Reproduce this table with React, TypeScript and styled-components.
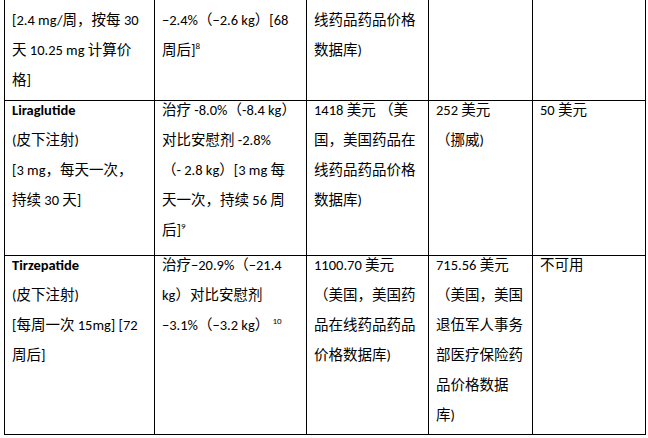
import styled, { createGlobalStyle } from "styled-components";
import { ReactNode } from "react";

const GlobalStyle = createGlobalStyle`
  html, body {
    margin: 0;
    padding: 0;
    background: #ffffff;
  }
  body {
    font-family: "Carlito", "Lato", "Noto Sans CJK SC", sans-serif;
    color: #000000;
  }
`;

const Table = styled.div`
  display: flex;
  flex-direction: column;
  width: 642px;
  margin-left: 4px;
`;

const Row = styled.div<{ $height: number }>`
  display: grid;
  grid-template-columns: 150px 152px 122px 104px 114px;
  height: ${({ $height }) => $height}px;
`;

const Cell = styled.div<{ $padTop: number; $last: boolean }>`
  box-sizing: border-box;
  border-left: 1px solid #000;
  border-right: ${({ $last }) => ($last ? "1px solid #000" : "none")};
  border-bottom: 1px solid #000;
  padding: ${({ $padTop }) => $padTop}px 4px 0 7px;
  font-size: 14.5px;
  overflow: hidden;
`;

const Line = styled.div`
  line-height: 18px;
  margin-bottom: 12px;
  white-space: nowrap;
`;

const Name = styled.span`
  font-weight: 700;
`;

const Sup = styled.sup`
  font-size: 9px;
  line-height: 0;
  vertical-align: super;
`;

type RowData = {
  height: number;
  padTop: number;
  cells: ReactNode[][];
};

const rows: RowData[] = [
  {
    height: 101,
    padTop: 11,
    cells: [
      ["[2.4 mg/周，按每 30", "天 10.25 mg 计算价", "格]"],
      [
        "−2.4%（−2.6 kg）[68",
        <>
          周后]<Sup>8</Sup>
        </>,
      ],
      ["线药品药品价格", "数据库)"],
      [],
      [],
    ],
  },
  {
    height: 155,
    padTop: 0,
    cells: [
      [<Name>Liraglutide</Name>, "(皮下注射)", "[3 mg，每天一次，", "持续 30 天]"],
      [
        "治疗 -8.0%（-8.4 kg）",
        "对比安慰剂 -2.8%",
        "（- 2.8 kg）[3 mg 每",
        "天一次，持续 56 周",
        <>
          后]<Sup>9</Sup>
        </>,
      ],
      ["1418 美元 （美", "国，美国药品在", "线药品药品价格", "数据库)"],
      ["252 美元", "（挪威)"],
      ["50 美元"],
    ],
  },
  {
    height: 179,
    padTop: 0,
    cells: [
      [<Name>Tirzepatide</Name>, "(皮下注射)", "[每周一次 15mg] [72", "周后]"],
      [
        "治疗−20.9%（−21.4",
        "kg）对比安慰剂",
        <>
          −3.1%（−3.2 kg） <Sup>10</Sup>
        </>,
      ],
      ["1100.70 美元", "（美国，美国药", "品在线药品药品", "价格数据库)"],
      ["715.56 美元", "（美国，美国", "退伍军人事务", "部医疗保险药", "品价格数据", "库)"],
      ["不可用"],
    ],
  },
];

export default function App() {
  return (
    <>
      <GlobalStyle />
      <Table>
        {rows.map((row, r) => (
          <Row key={r} $height={row.height}>
            {row.cells.map((cell, c) => (
              <Cell key={c} $padTop={row.padTop} $last={c === row.cells.length - 1}>
                {cell.map((line, l) => (
                  <Line key={l}>{line}</Line>
                ))}
              </Cell>
            ))}
          </Row>
        ))}
      </Table>
    </>
  );
}
